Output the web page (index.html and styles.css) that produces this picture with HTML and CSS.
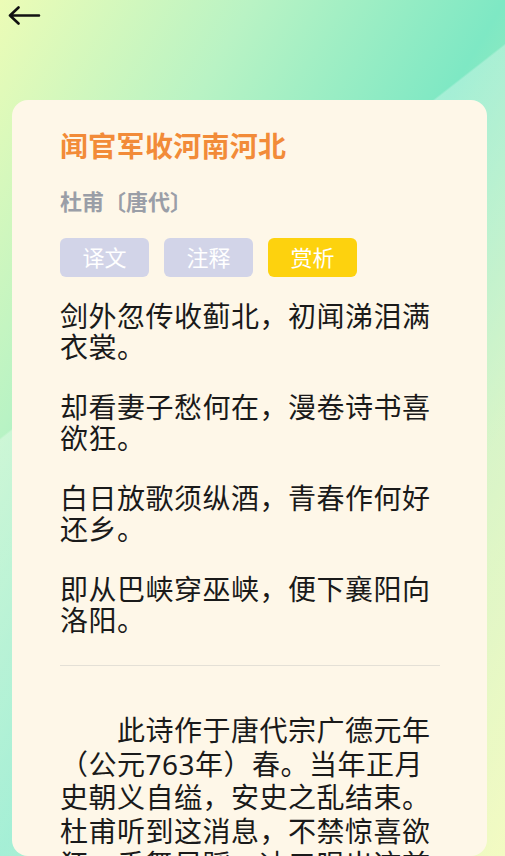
FILE: index.html
```html
<!DOCTYPE html>
<html lang="zh-CN">
  <head>
    <title>闻官军收河南河北</title>
    <meta charset="UTF-8">
    <link rel="stylesheet" href="styles.css">
  </head>
  <body>
    <div class="bg-band"></div>
    <div class="topbar">
        <span class="back">
            <svg width="34" height="22" viewBox="0 0 34 22">
                <path d="M32 9.5H3M11.5 1.5L3 9.5l8.5 8" fill="none" stroke="#111" stroke-width="2.6" stroke-linecap="round" stroke-linejoin="round"/>
            </svg>
        </span>
    </div>
    <div class="card">
        <h1 class="title">闻官军收河南河北</h1>
        <div class="author">杜甫〔唐代〕</div>
        <div class="tabs">
            <span class="tab">译文</span>
            <span class="tab">注释</span>
            <span class="tab active">赏析</span>
        </div>
        <div class="poem">
            <p>剑外忽传收蓟北，初闻涕泪满衣裳。</p>
            <p>却看妻子愁何在，漫卷诗书喜欲狂。</p>
            <p>白日放歌须纵酒，青春作何好还乡。</p>
            <p>即从巴峡穿巫峡，便下襄阳向洛阳。</p>
        </div>
        <div class="line"></div>
        <div class="analysis">
            <p>此诗作于唐代宗广德元年（公元763年）春。当年正月史朝义自缢，安史之乱结束。杜甫听到这消息，不禁惊喜欲狂，手舞足蹈，冲口唱出这首七律。</p>
        </div>
    </div>
  </body>
</html>
```

FILE: styles.css
```css
*{
    box-sizing: border-box;
}
html,body{
    margin: 0;
    height: 100%;
}
body{
    position: relative;
    display: flex;
    flex-direction: column;
    overflow: hidden;
    font-family: "Noto Sans", "Noto Sans CJK SC", sans-serif;
    color: #1a1a1a;
    background: linear-gradient(to bottom right, #ecfcb6 0%, #b9f3c4 25%, #7ee8c4 50%, #c8f0b0 75%, #eef9a8 100%);
}
/* lighter diagonal band behind the card */
.bg-band{
    position: absolute;
    inset: 0;
    background: linear-gradient(142deg, rgba(255,255,255,0) 35%, rgba(255,255,255,.3) 35.2%, rgba(255,255,255,.3) 100%);
    pointer-events: none;
}
.topbar{
    position: relative;
    height: 100px;
    flex-shrink: 0;
    padding: 6px 0 0 7px;
}
.back{
    display: inline-block;
}
.card{
    position: relative;
    flex: 1;
    margin: 0 18px 0 12px;
    padding: 26px 47px 0 48px;
    background: #fef7e8;
    border-radius: 16px;
    overflow: hidden;
}
.title{
    margin: 0;
    font-size: 28px;
    line-height: 40px;
    font-weight: bold;
    letter-spacing: 0.3px;
    color: #f28b38;
}
.author{
    margin-top: 20px;
    font-size: 22px;
    line-height: 30px;
    font-weight: bold;
    color: #9a9ea7;
}
.tabs{
    display: flex;
    gap: 15px;
    margin-top: 22px;
}
.tab{
    width: 89px;
    height: 39px;
    line-height: 39px;
    text-align: center;
    font-size: 22px;
    color: #fff;
    background: #d2d4e8;
    border-radius: 6px;
}
.tab.active{
    background: #fdd20e;
}
.poem{
    margin-top: 24px;
}
.poem p, .analysis p{
    margin: 0;
    font-size: 28px;
    letter-spacing: 0.5px;
}
.poem p{
    line-height: 30.5px;
    margin-bottom: 30px;
}
.line{
    height: 1px;
    background: #e4e0d6;
    margin-top: 13px;
}
.analysis{
    margin-top: 48px;
}
.analysis p{
    line-height: 33.5px;
    text-indent: 57px;
}
```
